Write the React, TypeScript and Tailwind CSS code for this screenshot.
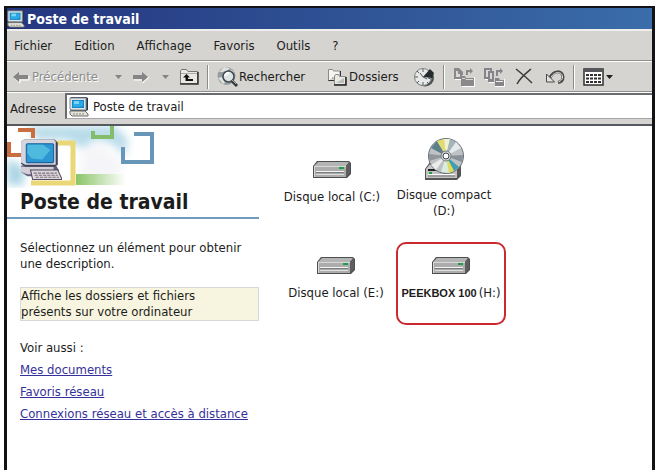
import React from "react";
import clsx from "clsx";

type IconProps = { className?: string };

type DriveItemProps = {
  label: React.ReactNode;
  icon: React.ReactNode;
  className?: string;
};

const menus = ["Fichier", "Edition", "Affichage", "Favoris", "Outils", "?"];
const links = ["Mes documents", "Favoris réseau", "Connexions réseau et accès à distance"];

function SmallComputerIcon({ className }: IconProps) {
  return (
    <svg viewBox="0 0 20 20" className={className} aria-hidden="true">
      <path d="M1 1l1-1h15l2 1v12l-2 1H2l-1-1z" fill="#2b3447" />
      <path d="M1 1h16v12H2l-1-1z" fill="#dbe5e8" stroke="#7d8a94" />
      <path d="M3 3h12v8H3z" fill="#1586c8" />
      <path d="M4 4h10v5l-3 1H4z" fill="#2aa9e2" />
      <path d="M5 4h5v3H5z" fill="#7ad4f2" />
      <path d="M1 14h15l3 3v2H3l-2-2z" fill="#e4e2d9" stroke="#6c6c68" />
      <path d="M4 17h12" stroke="#8c8b86" strokeDasharray="2 1" />
    </svg>
  );
}

function DriveIcon({ className }: IconProps) {
  return (
    <svg viewBox="0 0 40 19" className={className} aria-hidden="true">
      <path d="M1 6l4-5h32l2 2v11l-4 4H1z" fill="#4f4f4f" />
      <path d="M2 6l4-4h31l-3 4z" fill="#b4b4b4" />
      <path d="M2 6h32v11H2z" fill="#acacac" />
      <path d="M34 6l4-4v11l-4 4z" fill="#5e5e5e" />
      <path d="M2 6.500h32M2.500 6v11" stroke="#d8d8d8" />
      <path d="M4 11.500h28" stroke="#f5f5f5" />
      <path d="M4 12.500h28" stroke="#7a7a7a" />
      <path d="M4 14.500h28" stroke="#dedede" />
      <path d="M27 7h5v2h-5z" fill="#18a13e" />
    </svg>
  );
}

function DiscIcon({ className }: IconProps) {
  return (
    <svg viewBox="0 0 40 43" className={className} aria-hidden="true">
      <path d="M1 31l5-7h31v14l-4 4H1z" fill="#555" />
      <path d="M2 31l5-6h28l-3 6z" fill="#c9c9c9" />
      <path d="M2 31h31v9H2z" fill="#c2c2c2" />
      <path d="M4 38h27" stroke="#777" />
      <path d="M4 36.500h27" stroke="#fff" />
      <path d="M4 32h13" stroke="#222" strokeWidth="2" />
      <path d="M5 34h3v2H5z" fill="#18a13e" />
      <circle cx="22" cy="18" r="17.500" fill="#bfc2c4" stroke="#667078" />
      <path d="M22 18L7 10l6-7z" fill="#5c7f8c" />
      <path d="M22 18L13 3l7-2z" fill="#e0dd6e" />
      <path d="M22 18L20 1h6z" fill="#f1f3d0" />
      <path d="M22 18l4-17 6 3z" fill="#a4b4bc" />
      <path d="M22 18L32 4l5 6z" fill="#e5eaec" />
      <path d="M22 18l17-1-1 7z" fill="#899097" />
      <path d="M22 18l13 11-5 4z" fill="#3e9eb2" />
      <path d="M22 18l8 15-5 2z" fill="#e3db55" />
      <path d="M22 18l3 17-8-1z" fill="#d9eddb" />
      <path d="M22 18L7 27l5 5z" fill="#ebebeb" />
      <path d="M22 18L5 16v7z" fill="#91969a" />
      <circle cx="22" cy="18" r="5" fill="#d9dcdd" stroke="#727a7e" />
      <circle cx="22" cy="18" r="3" fill="#fff" stroke="#394349" />
    </svg>
  );
}

function BackIcon() {
  return (
    <svg viewBox="0 0 18 12" className="h-3 w-[18px]" aria-hidden="true">
      <path d="M2 7l6 5V9h9V5" fill="none" stroke="#fff" />
      <path d="M1 6l6-5v3h9v4H7v3z" fill="#858585" />
    </svg>
  );
}

function ForwardIcon() {
  return (
    <svg viewBox="0 0 18 12" className="h-3 w-[18px]" aria-hidden="true">
      <path d="M2 9h9v3l6-6" fill="none" stroke="#fff" />
      <path d="M16 6l-6-5v3H1v4h9v3z" fill="#858585" />
    </svg>
  );
}

function Caret({ className }: IconProps) {
  return (
    <svg viewBox="0 0 7 4" className={clsx("h-1 w-[7px] shrink-0", className)} aria-hidden="true">
      <path d="M0 0h7L3.500 4z" fill="currentColor" />
    </svg>
  );
}

function UpIcon() {
  return (
    <svg viewBox="0 0 20 17" className="h-[17px] w-5" aria-hidden="true">
      <path d="M1.500 15.500V3l1-1.500h5l1.500 2h9.500v12z" fill="#e9e8e2" stroke="#77777a" />
      <path d="M2 5.500h16" stroke="#aaa" />
      <path d="M19 4v12H1" fill="none" stroke="#333" strokeWidth="1.500" />
      <path d="M7.500 6L4 9.500h2.500V13H14v-2H9V9.500h2z" fill="#111" />
    </svg>
  );
}

function SearchIcon() {
  return (
    <svg viewBox="0 0 22 22" className="size-[22px]" aria-hidden="true">
      <circle cx="9.500" cy="10" r="9" fill="#929ca1" />
      <path d="M2 6l5-5 6 1-3 3-5 1zM1 12l4-1 3 6-2 1zM13 3l4 3-2 2z" fill="#dde1df" />
      <circle cx="11.500" cy="10.500" r="5.500" fill="#dce4e6" stroke="#43494c" strokeWidth="1.500" />
      <path d="M8 10a4 4 0 0 1 4-3" fill="none" stroke="#fff" strokeWidth="2" />
      <path d="M15 15l5 5" stroke="#303538" strokeWidth="3" />
      <path d="M15 14l4 4" stroke="#a4abac" />
    </svg>
  );
}

function FoldersIcon() {
  return (
    <svg viewBox="0 0 20 18" className="h-[18px] w-5" aria-hidden="true">
      <path d="M1.500 13V1.500h4l1 1.500h6.500v7h-8" fill="#f5f5f2" stroke="#8a8a8a" />
      <path d="M1.500 12.500H7M13.500 3v6" fill="none" stroke="#333" />
      <path d="M7.500 16.500V8l1-1.500h3l1 2h6v8z" fill="#e8e8e5" stroke="#8a8a8a" />
      <path d="M9 15l8-5v5z" fill="#bdbdba" />
      <path d="M19 9v8H7" fill="none" stroke="#222" strokeWidth="1.500" />
    </svg>
  );
}

function HistoryIcon() {
  return (
    <svg viewBox="0 0 22 20" className="h-5 w-[22px]" aria-hidden="true">
      <ellipse cx="12" cy="11" rx="9" ry="8.500" fill="#4c5152" />
      <circle cx="10" cy="10" r="8.500" fill="#e6e9e8" stroke="#7d8485" />
      <path d="M10 10l7-8 4 4-2 5z" fill="#252b2d" />
      <path d="M10 2v3M10 15v3M2 10h3M15 11l3 1M4 4l2 2M4 16l2-2M14 15l2 2" stroke="#555d5f" />
      <path d="M10 10l4 2M10 10l-3-4" stroke="#555" />
    </svg>
  );
}

function MoveToIcon() {
  return (
    <svg viewBox="0 0 22 20" className="h-5 w-[22px]" aria-hidden="true">
      <path d="M2 12.500h6M21.500 10v9.500H9" fill="none" stroke="#fff" />
      <path d="M1 1h5v4h3v7H1z" fill="#89898c" />
      <path d="M6 1l4 4v3H9V5H6z" fill="#89898c" />
      <path d="M3 4h2v3h2v3H3z" fill="#d9d8d5" />
      <path d="M8 9h4l1 2h8v8H8z" fill="#89898c" />
      <path d="M9 11.500h3l1 1h7" fill="none" stroke="#d8d8d5" />
      <path d="M13 8V3h4V1l3 3-3 3V5h-2v3z" fill="#89898c" />
    </svg>
  );
}

function CopyToIcon() {
  return (
    <svg viewBox="0 0 22 20" className="h-5 w-[22px]" aria-hidden="true">
      <path d="M2 12.500h3M6 15.500h5M21.500 12v7.500H12" fill="none" stroke="#fff" />
      <path d="M1 1h8v11H1z" fill="#858589" />
      <path d="M3 3h4v7H3z" fill="#dad9d6" />
      <path d="M5 4h6v11H5z" fill="#858589" />
      <path d="M7 6h2v6H7z" fill="#dad9d6" />
      <path d="M12 11h4l1 2h4v6h-9z" fill="#858589" />
      <path d="M13 14.500h7" stroke="#eee" />
      <path d="M13 9V3h4V1l3 3-3 3V5h-2v4z" fill="#858589" />
    </svg>
  );
}

function DeleteIcon() {
  return (
    <svg viewBox="0 0 18 17" className="h-[17px] w-[18px]" aria-hidden="true">
      <path d="M1 1c5 4 10 8 16 14M16 1C10 6 5 10 2 16" fill="none" stroke="#3d3d3d" strokeWidth="1.500" />
    </svg>
  );
}

function UndoIcon() {
  return (
    <svg viewBox="0 0 20 14" className="h-3.5 w-5" aria-hidden="true">
      <path d="M5 8C8 0 18 0 18 7c0 3-2 5-5 5.500" fill="none" stroke="#494949" strokeWidth="3" />
      <path d="M6 7.500C9 1 17.500 1 17.500 7c0 2.500-1.500 4-4 5" fill="none" stroke="#dedede" />
      <path d="M1.500 4v8h8z" fill="#e2e2e2" stroke="#494949" />
    </svg>
  );
}

function ViewsIcon() {
  return (
    <svg viewBox="0 0 21 18" className="h-[18px] w-[21px]" aria-hidden="true">
      <path d="M1 1h19v16H1z" fill="#fff" stroke="#2f2f2f" strokeWidth="1.500" />
      <path d="M1 1h19v3H1z" fill="#55565a" />
      <path d="M3 7h16M3 10.500h16M3 14h16" stroke="#303030" strokeWidth="2" strokeDasharray="3 1" />
    </svg>
  );
}

function Banner() {
  return (
    <svg viewBox="0 0 160 62" className="h-[62px] w-40" aria-hidden="true">
      <defs>
        <filter id="cloud" x="-20%" y="-30%" width="140%" height="160%">
          <feGaussianBlur stdDeviation="4" />
        </filter>
        <linearGradient id="grass">
          <stop offset="0" stopColor="#8ac568" />
          <stop offset="1" stopColor="#fff" />
        </linearGradient>
      </defs>
      <g filter="url(#cloud)">
        <path d="M20 0h88l13 13-3 18-10-12-18-6-15 10-14-9H30z" fill="#b8dbe9" />
        <path d="M0 33l17 8v18H0z" fill="#acd5e4" />
        <path d="M75 26l18-7 25 20-10 14H72z" fill="#f5f4f8" />
      </g>
      <path d="M11 4h15v8M14 29H2V16" fill="none" stroke="#c96e40" strokeWidth="4" />
      <path d="M48 17h18v40H24" fill="none" stroke="#ead878" strokeWidth="5" />
      <path d="M86 5v6h19V0" fill="none" stroke="#83bd69" strokeWidth="4" />
      <path d="M127 8h18v28h-29V21" fill="none" stroke="#6796b9" strokeWidth="4" />
      <path d="M69 48h50v11H69z" fill="url(#grass)" />
      <svg x="13" y="13" width="42" height="43" viewBox="0 0 40 40">
        <path d="M1 25l4-1h29l3 5v6H7l-6-4z" fill="#65627b" />
        <path d="M1 26h31v7H7l-6-2z" fill="#d1ced6" />
        <path d="M1 2l3-2h29l3 3v21l-3 2H5l-4-3z" fill="#42415b" />
        <path d="M1 2l3-2h28l2 2v22H5l-4-2z" fill="#d5d5df" />
        <rect x="6" y="4" width="26" height="18" rx="1" fill="#2c96d3" stroke="#1b6299" />
        <path d="M7 5h15l7 5-8 9-10-1-4-5z" fill="#4fb9de" />
        <path d="M10 29h26l4 9H12z" fill="#dfd7db" stroke="#514c60" />
        <path d="M13 32h22M14 34h22M15 36h22" stroke="#79717f" strokeDasharray="3 1" />
      </svg>
    </svg>
  );
}

function Separator() {
  return <span className="h-6 w-0.5 shrink-0 border-r border-l border-r-white border-l-[#8b8b8b]" />;
}

function ToolButton({ label, children, className }: { label: string; children: React.ReactNode; className?: string }) {
  return (
    <button type="button" aria-label={label} title={label} className={clsx("flex shrink-0 items-center", className)}>
      {children}
    </button>
  );
}

function DriveItem({ label, icon, className }: DriveItemProps) {
  return (
    <button type="button" className={clsx("flex shrink-0 flex-col items-center leading-4 whitespace-nowrap", className)}>
      {icon}
      <span>{label}</span>
    </button>
  );
}

export default function App() {
  return (
    <div className="min-h-screen bg-white pt-[6px] pr-[2px] pl-1 font-['DejaVu_Sans_Condensed','DejaVu_Sans',sans-serif] text-[13px] text-[#1c1c1c]">
      <div className="flex min-h-[calc(100vh-6px)] flex-col border-x-[3px] border-t-2 border-[#111317]">
        <header className="flex h-[21px] items-center gap-0.5 bg-linear-to-r from-[#24357f] to-[#3b6daa] text-white">
          <SmallComputerIcon className="size-[18px]" />
          <h1 className="text-[14px] leading-4 font-bold">Poste de travail</h1>
        </header>

        <nav className="flex h-8 items-center gap-[22px] border-t-2 border-b border-t-[#eeeeeb] border-b-[#8e8e8c] bg-[#d5d4d0] pl-[7px]">
          {menus.map((menu) => (
            <button key={menu} type="button">{menu}</button>
          ))}
        </nav>

        <div className="flex h-[30px] items-center border-t border-white bg-[#d5d4d0] pl-[5px]">
          <button type="button" className="flex shrink-0 items-center gap-0.5 text-[#8c8c8c]">
            <BackIcon />
            <span className="w-[71px] text-left [text-shadow:1px_1px_0_#fff]">Précédente</span>
          </button>
          <Caret className="ml-3 text-[#858585]" />
          <ToolButton label="Suivante" className="ml-2.5"><ForwardIcon /></ToolButton>
          <Caret className="ml-3 text-[#858585]" />
          <ToolButton label="Dossier parent" className="mr-2 ml-2.5"><UpIcon /></ToolButton>
          <Separator />
          <button type="button" className="ml-2 flex shrink-0 items-center">
            <SearchIcon />
            <span className="w-[72px] text-left whitespace-nowrap">Rechercher</span>
          </button>
          <button type="button" className="ml-4 flex shrink-0 items-center gap-0.5">
            <FoldersIcon />
            <span className="w-[52px] text-left">Dossiers</span>
          </button>
          <ToolButton label="Historique" className="mr-2 ml-3"><HistoryIcon /></ToolButton>
          <Separator />
          <ToolButton label="Déplacer vers" className="ml-2"><MoveToIcon /></ToolButton>
          <ToolButton label="Copier vers" className="ml-2"><CopyToIcon /></ToolButton>
          <ToolButton label="Supprimer" className="ml-2.5"><DeleteIcon /></ToolButton>
          <ToolButton label="Annuler" className="mr-2 ml-3"><UndoIcon /></ToolButton>
          <Separator />
          <ToolButton label="Affichage" className="ml-2 gap-0.5">
            <ViewsIcon />
            <Caret className="text-[#202020]" />
          </ToolButton>
        </div>

        <form className="flex h-[35px] items-start border-t border-b-2 border-t-[#8e8e8c] border-b-[#555960] bg-[#d5d4d0]">
          <label htmlFor="address" className="flex h-8 w-[58px] shrink-0 items-center border-t border-white pl-[3px]">Adresse</label>
          <div className="min-w-0 flex-1 border-t border-white">
            <div className="flex h-[26px] items-center gap-1 border-t-2 border-b border-l-2 border-[#6b6c70] border-b-[#a5a5a5] bg-white pl-0.5">
              <SmallComputerIcon className="size-5 shrink-0" />
              <input id="address" defaultValue="Poste de travail" className="min-w-0 flex-1 bg-transparent outline-none" />
            </div>
          </div>
        </form>

        <div className="flex flex-1 bg-white">
          <aside className="w-[252px] shrink-0">
            <Banner />
            <h2 className="border-b-2 border-[#6f9bbf] pt-0.5 pb-[3px] pl-[13px] text-[21px] leading-6 font-bold">Poste de travail</h2>
            <div className="pl-[13px]">
              <p className="pt-[21px] leading-4">Sélectionnez un élément pour obtenir une description.</p>
              <p className="mt-[15px] border border-[#d5d9dc] bg-[#f7f5df] leading-4">
                Affiche les dossiers et fichiers
                <br />
                présents sur votre ordinateur
              </p>
              <p className="mt-4 leading-[22px]">Voir aussi :</p>
              <ul>
                {links.map((link) => (
                  <li key={link} className="leading-[22px] whitespace-nowrap">
                    <a href="#" className="text-[#35319a] underline">{link}</a>
                  </li>
                ))}
              </ul>
            </div>
          </aside>

          <main className="min-w-0 flex-1 pt-3">
            <div className="flex items-end pl-[15px]">
              <DriveItem
                className="w-[116px] gap-2.5 pb-3.5"
                icon={<DriveIcon className="h-[19px] w-10" />}
                label="Disque local (C:)"
              />
              <DriveItem
                className="w-[108px] gap-1.5"
                icon={<DiscIcon className="h-[43px] w-10" />}
                label={<>Disque compact<br />(D:)</>}
              />
            </div>
            <div className="mt-[23px] flex items-start gap-0.5 pl-[19px]">
              <DriveItem
                className="w-[116px] gap-2.5 pt-3.5"
                icon={<DriveIcon className="h-[19px] w-10" />}
                label="Disque local (E:)"
              />
              <DriveItem
                className="h-[83px] w-[110px] gap-2.5 rounded-[10px] border-2 border-[#cb2930] pt-3"
                icon={<DriveIcon className="h-[19px] w-10" />}
                label={
                  <span className="flex items-center gap-0.5">
                    <span className="font-['Liberation_Sans_Narrow','Liberation_Sans',sans-serif] text-[11px] font-bold">PEEKBOX 100</span>
                    <span>(H:)</span>
                  </span>
                }
              />
            </div>
          </main>
        </div>
      </div>
    </div>
  );
}
